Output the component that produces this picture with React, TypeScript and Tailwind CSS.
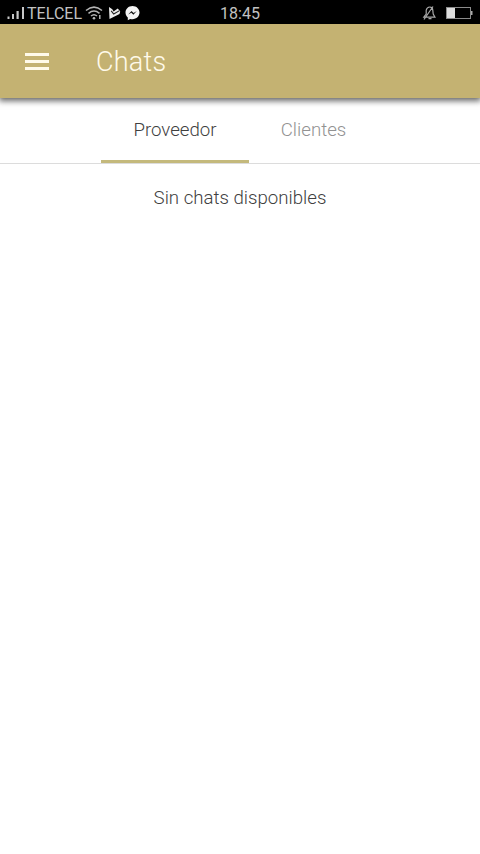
function StatusBar() {
  return (
    <div className="grid h-6 grid-cols-3 items-center bg-black text-[#c2c2c2]">
      <div className="flex h-6 items-center pl-[7px]">
        <svg width="18" height="14" viewBox="0 0 18 14" fill="#c8c8c8" aria-hidden="true">
          <rect x="0.5" y="10.500" width="2" height="2.500" />
          <rect x="5" y="8" width="2" height="5" />
          <rect x="9.500" y="5" width="2.200" height="8" />
          <rect x="15" y="1" width="2" height="12" />
        </svg>
        <span className="ml-[2px] w-[58px] pt-0.5 text-[16px] leading-6 whitespace-nowrap tracking-[0.05px]">TELCEL</span>
        <svg width="18" height="16" viewBox="0 0 18 16" fill="none" stroke="#b4b4b4" strokeWidth="1.5" aria-hidden="true">
          <path d="M1 5.5Q9-1.2 17 5.5M3.500 8.3Q9 3.8 14.500 8.3M6 11Q9 8.4 12 11" />
          <circle cx="9" cy="13.2" r="1.3" fill="#bbb" stroke="none" />
          <path d="M14.800 10v4" strokeWidth="1.500" />
        </svg>
        <svg className="ml-[5px]" width="13" height="14" viewBox="0 0 13 14" aria-hidden="true">
          <path d="M1 1L4.300 3.200L5.600 5.400L9.700 2.600L12.200 5.200L11.500 8L1.500 13Z" fill="#eee" />
          <path d="M3.200 4.800L5.700 8L11.500 4.600" fill="none" stroke="#222" strokeWidth="1.100" />
        </svg>
        <svg className="ml-[4px]" width="15" height="16" viewBox="0 0 15 16" aria-hidden="true">
          <path d="M7.5 1C3.5 1 .5 3.9.5 7.6c0 2 .9 3.7 2.3 4.9v2.8l2.4-1.4c.7.2 1.5.3 2.3.3 4 0 7-2.9 7-6.6S11.500 1 7.500 1Z" fill="#f4f4f4" />
          <path d="M3.200 9.500L6.500 6L8.600 8L11.800 6L8.400 9.700L6.300 7.700Z" fill="#111" />
        </svg>
      </div>
      <span className="pt-0.5 text-center text-[16px] leading-6">18:45</span>
      <div className="flex items-center justify-end pr-[7px]">
        <svg width="14" height="16" viewBox="0 0 14 16" fill="none" stroke="#aaa" strokeWidth="1.2" aria-hidden="true">
          <path d="M1.800 12.200L4.200 9V5.200Q5 2 7.800 2T10.800 5.200L11.200 9L13 12.200ZM6.500 13.700h3M11 1.500L2 14.500" />
        </svg>
        <svg className="ml-[10px]" width="27" height="13" viewBox="0 0 27 13" aria-hidden="true">
          <rect x=".5" y=".5" width="24" height="11" fill="none" stroke="#8c8c8c" />
          <rect x="1" y="1" width="8" height="10" fill="#dedede" />
          <rect x="25" y="4" width="1.500" height="4" fill="#aaa" />
        </svg>
      </div>
    </div>
  );
}

function AppHeader() {
  return (
    <header className="relative flex h-[74px] items-center bg-[#c4b272] pl-[25px] text-[#fffaea] shadow-[0_2px_6px_1px_rgba(0,0,0,0.6)]">
      <button aria-label="Menu" className="flex w-6 flex-col gap-1">
        <span className="h-[3px] w-full bg-current" />
        <span className="h-[3px] w-full bg-current" />
        <span className="h-[3px] w-full bg-current" />
      </button>
      <h1 className="ml-[47px] pt-0.5 text-[27px] leading-8 font-light tracking-[0.25px]">Chats</h1>
    </header>
  );
}

export default function App() {
  return (
    <div className="flex min-h-screen flex-col overflow-hidden bg-white font-['Roboto',sans-serif]">
      <StatusBar />
      <AppHeader />
      <nav className="flex h-[66px] border-b border-[#dcdcdc] pl-[101px]">
        <button className="mb-[-1px] h-[65px] w-[148px] border-b-3 border-[#c4b97c] pt-0.5 text-[18.67px] font-light text-[#404040]">
          Proveedor
        </button>
        <button className="h-[62px] w-[129px] pt-0.5 text-[18.67px] font-light text-[#929292]">Clientes</button>
      </nav>
      <main className="pt-5 text-center text-[18.67px] leading-7 font-light text-[#404040]">Sin chats disponibles</main>
    </div>
  );
}
